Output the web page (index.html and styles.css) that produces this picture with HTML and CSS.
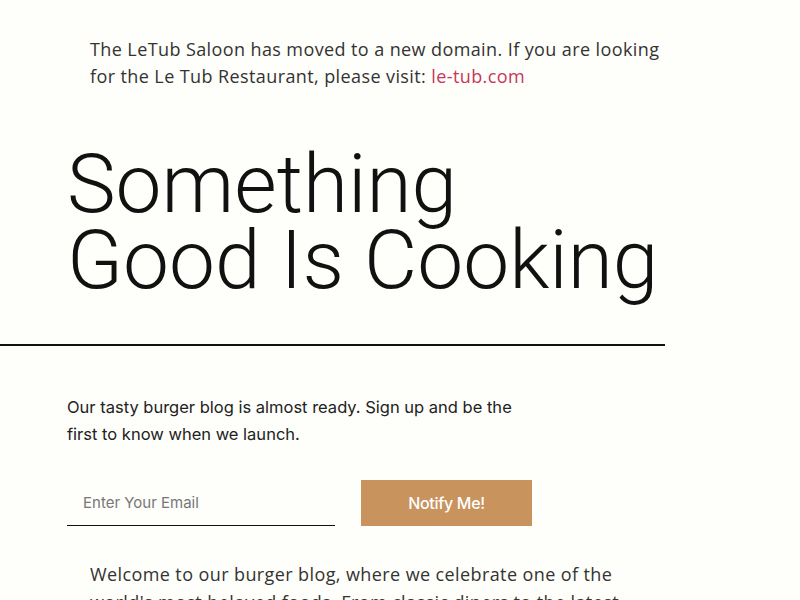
FILE: index.html
```html
<!DOCTYPE html>
<html lang="en">
<head>
    <meta charset="UTF-8">
    <meta name="viewport" content="width=device-width, initial-scale=1.0">
    <title>LeTub Saloon - Coming Soon</title>
    <link rel="stylesheet" href="styles.css">
</head>
<body>
    <div class="page">
        <p class="notice">
            The LeTub Saloon has moved to a new domain. If you are looking
            for the Le Tub Restaurant, please visit: <a href="#">le-tub.com</a>
        </p>

        <h1 class="headline">Something<br>Good Is Cooking</h1>

        <hr class="divider">

        <section class="signup">
            <p class="signup-text">Our tasty burger blog is almost ready. Sign up and be the first to know when we launch.</p>
            <form class="signup-form" onsubmit="return false">
                <input type="email" class="email-input" placeholder="Enter Your Email">
                <button type="submit" class="notify-btn">Notify Me!</button>
            </form>
        </section>

        <p class="intro">
            Welcome to our burger blog, where we celebrate one of the
            world's most beloved foods. From classic diners to the latest
            smash burger spots, we share recipes, reviews and stories.
        </p>
    </div>
</body>
</html>
```

FILE: styles.css
```css
html {
    min-width: 1333px;
}

body {
    margin: 0;
    min-height: 1265px;
    background-color: #fefefa;
    color: #333;
    font-family: 'Open Sans', sans-serif;
}

.page {
    width: 665px;
}

.notice {
    margin: 0;
    width: 590px;
    padding: 36px 0 0 90px;
    font-size: 18px;
    line-height: 27px;
    letter-spacing: 0.4px;
    color: #333;
}

.notice a {
    color: #c7375c;
    text-decoration: none;
}

.headline {
    margin: 56px 0 0 67px;
    font-family: 'Roboto', sans-serif;
    font-weight: 300;
    font-size: 82px;
    line-height: 76px;
    letter-spacing: 0;
    color: #111;
}

.divider {
    margin: 46px 0 0 0;
    border: none;
    height: 2px;
    background-color: #111;
}

.signup {
    padding: 48px 0 0 67px;
}

.signup-text {
    margin: 0;
    width: 460px;
    font-family: 'Inter', sans-serif;
    font-size: 16.5px;
    line-height: 27px;
    color: #222;
}

.signup-form {
    display: flex;
    gap: 26px;
    margin-top: 32px;
}

.email-input {
    width: 268px;
    height: 46px;
    box-sizing: border-box;
    padding: 0 16px;
    border: none;
    border-bottom: 1px solid #111;
    background: transparent;
    font-family: 'Inter', sans-serif;
    font-size: 15px;
    color: #333;
    outline: none;
}

.email-input::placeholder {
    color: #777;
}

.notify-btn {
    width: 171px;
    height: 46px;
    border: none;
    background-color: #c8935d;
    color: #fff;
    font-family: 'Inter', sans-serif;
    font-size: 16px;
    font-weight: 500;
    letter-spacing: -0.3px;
    cursor: pointer;
}

.intro {
    margin: 34px 0 0 0;
    padding-left: 90px;
    width: 540px;
    font-size: 18px;
    line-height: 28px;
    letter-spacing: 0.4px;
    color: #333;
}
```
